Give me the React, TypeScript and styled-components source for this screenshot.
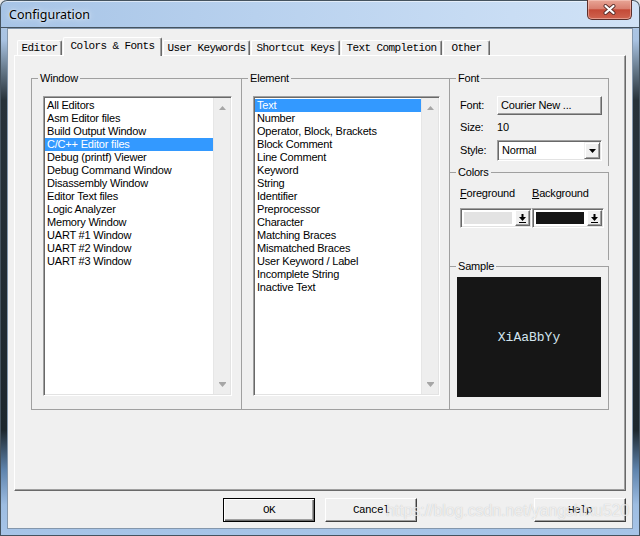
import { FC, ReactNode } from 'react'
import styled, { createGlobalStyle } from 'styled-components'

const windowItems = [
  'All Editors',
  'Asm Editor files',
  'Build Output Window',
  'C/C++ Editor files',
  'Debug (printf) Viewer',
  'Debug Command Window',
  'Disassembly Window',
  'Editor Text files',
  'Logic Analyzer',
  'Memory Window',
  'UART #1 Window',
  'UART #2 Window',
  'UART #3 Window'
]

const elementItems = [
  'Text',
  'Number',
  'Operator, Block, Brackets',
  'Block Comment',
  'Line Comment',
  'Keyword',
  'String',
  'Identifier',
  'Preprocessor',
  'Character',
  'Matching Braces',
  'Mismatched Braces',
  'User Keyword / Label',
  'Incomplete String',
  'Inactive Text'
]

const tabs = [
  { label: 'Editor', w: 45 },
  { label: 'Colors & Fonts', w: 99, active: true },
  { label: 'User Keywords', w: 87 },
  { label: 'Shortcut Keys', w: 89 },
  { label: 'Text Completion', w: 101 },
  { label: 'Other', w: 47 }
]

const UpArrow = () => (
  <svg width="7" height="4" viewBox="0 0 7 4">
    <path d="M0 4 L3.5 0 L7 4 Z" fill="#a6a6a6" />
  </svg>
)

const DownArrow = () => (
  <svg width="7" height="5" viewBox="0 0 7 5">
    <rect x="0" y="0" width="7" height="1" fill="#a6a6a6" />
    <path d="M0 1 L7 1 L3.5 5 Z" fill="#a6a6a6" />
  </svg>
)

const ComboTriangle = () => (
  <svg width="7" height="4" viewBox="0 0 7 4">
    <path d="M0 0 H7 L3.5 4 Z" fill="#000" />
  </svg>
)

const PickArrow = () => (
  <svg width="7" height="9" viewBox="0 0 7 9">
    <path d="M2.5 0 H4.5 V3 H7 L3.5 7 L0 3 H2.5 Z" fill="#000" />
    <rect x="0" y="8" width="7" height="1" fill="#000" />
  </svg>
)

const CloseGlyph = () => (
  <svg width="13" height="11" viewBox="0 0 13 11">
    <path d="M2.5 2 L10.5 9 M10.5 2 L2.5 9" stroke="#5a302c" strokeWidth="4" strokeLinecap="round" />
    <path d="M2.5 2 L10.5 9 M10.5 2 L2.5 9" stroke="#fff" strokeWidth="2.2" strokeLinecap="round" />
  </svg>
)

const ItemList: FC<{ items: string[]; selected: number; width: number }> = ({ items, selected, width }) => (
  <ListBox $w={width}>
    <Items>
      {items.map((item, i) => (
        <Item key={item} $selected={i === selected}>
          {item}
        </Item>
      ))}
    </Items>
    <ScrollBar>
      <UpArrow />
      <DownArrow />
    </ScrollBar>
  </ListBox>
)

const ColorPicker: FC<{ color: string }> = ({ color }) => (
  <ColorCombo>
    <Swatch style={{ background: color }} />
    <PickButton>
      <PickArrow />
    </PickButton>
  </ColorCombo>
)

const GroupBox: FC<{ title: string; w: number; h: number; open?: boolean; children: ReactNode }> = ({
  title,
  w,
  h,
  open,
  children
}) => (
  <Group $w={w} $h={h} $open={open}>
    <Legend>{title}</Legend>
    {children}
  </Group>
)

const App = () => {
  return (
    <>
      <GlobalStyle />
      <Window>
        <TitleBar>
          <Title>Configuration</Title>
          <CloseButton>
            <CloseGlyph />
          </CloseButton>
        </TitleBar>
        <Client>
          <TabStrip>
            {tabs.map((t) => (
              <Tab key={t.label} $w={t.w} $active={t.active}>
                {t.label}
              </Tab>
            ))}
          </TabStrip>
          <Panel>
            <GroupBox title="Window" w={211} h={338}>
              <ListBody>
                <ItemList items={windowItems} selected={3} width={189} />
              </ListBody>
            </GroupBox>
            <Overlap>
              <GroupBox title="Element" w={209} h={338}>
                <ListBody>
                  <ItemList items={elementItems} selected={0} width={187} />
                </ListBody>
              </GroupBox>
            </Overlap>
            <RightColumn>
              <GroupBox title="Font" w={160} h={94} open>
                <FontGrid>
                  <Label>Font:</Label>
                  <FontButton>Courier New ...</FontButton>
                  <Label>Size:</Label>
                  <Label>10</Label>
                  <Label>Style:</Label>
                  <ComboBox>
                    <ComboText>Normal</ComboText>
                    <ComboButton>
                      <ComboTriangle />
                    </ComboButton>
                  </ComboBox>
                </FontGrid>
              </GroupBox>
              <GroupBox title="Colors" w={160} h={94} open>
                <ColorGrid>
                  <Label>
                    <u>F</u>oreground
                  </Label>
                  <Label>
                    <u>B</u>ackground
                  </Label>
                  <ColorPicker color="#e3e3e3" />
                  <ColorPicker color="#151515" />
                </ColorGrid>
              </GroupBox>
              <GroupBox title="Sample" w={160} h={150}>
                <SampleBody>
                  <SampleBox>XiAaBbYy</SampleBox>
                </SampleBody>
              </GroupBox>
            </RightColumn>
          </Panel>
          <ButtonRow>
            <DialogButton $default>OK</DialogButton>
            <DialogButton>Cancel</DialogButton>
            <HelpButton>Help</HelpButton>
          </ButtonRow>
        </Client>
        <Watermark>https://blog.csdn.net/yangshixu520</Watermark>
      </Window>
    </>
  )
}

const GlobalStyle = createGlobalStyle`
  html, body {
    margin: 0;
    padding: 0;
    background: #e9e9e9;
  }

  body {
    font-family: 'Liberation Sans', Arial, sans-serif;
  }

  #root {
    width: 640px;
    height: 536px;
  }
`

const Window = styled.div`
  position: relative;
  width: 640px;
  height: 536px;
  display: flex;
  flex-direction: column;
  border-radius: 7px 7px 0 0;
  overflow: hidden;
  background: linear-gradient(
    180deg,
    #b2cbe8 0px,
    #a9c3e2 40px,
    #66798a 70px,
    #27323a 100px,
    #1d272d 430px,
    #5f84ad 470px,
    #9dbde2 505px,
    #a8c5e8 536px
  );
  box-shadow: inset 0 0 0 1px #45535f;
`

const TitleBar = styled.div`
  flex: none;
  height: 28px;
  display: flex;
  align-items: flex-start;
  padding: 0 8px 0 9px;
  border-radius: 7px 7px 0 0;
  background: linear-gradient(90deg, #a7c4e6 0%, #b8d1ee 40%, #c9ddf4 80%, #d0e2f6 100%);
  box-shadow: inset 0 0 0 1px #45535f, inset 0 2px 0 rgba(255, 255, 255, 0.55);
`

const Title = styled.div`
  padding-top: 6px;
  font-family: 'Noto Sans', 'Liberation Sans', sans-serif;
  font-size: 12.5px;
  line-height: 18px;
  color: #000;
  text-shadow: 0 0 6px rgba(255, 255, 255, 0.9), 0 0 2px rgba(255, 255, 255, 0.8);
`

const CloseButton = styled.div`
  margin-left: auto;
  width: 45px;
  height: 20px;
  box-sizing: border-box;
  border: 1px solid #5c2f2b;
  border-top: none;
  border-radius: 0 0 5px 5px;
  background: linear-gradient(180deg, #e8a596 0%, #d98070 45%, #c44a37 52%, #cf6450 100%);
  box-shadow: inset 0 0 0 1px rgba(255, 220, 210, 0.45);
  display: flex;
  align-items: center;
  justify-content: center;
`

const Client = styled.div`
  flex: 1;
  margin: 0 7px 7px 7px;
  border: 1px solid #8497ac;
  background: #f0f0f0;
  display: flex;
  flex-direction: column;
  padding: 8px 6px 6px 6px;
`

const TabStrip = styled.div`
  position: relative;
  z-index: 1;
  height: 18px;
  display: flex;
  align-items: flex-end;
  gap: 1px;
  padding-left: 3px;
`

const Tab = styled.div<{ $w: number; $active?: boolean }>`
  width: ${(p) => p.$w}px;
  height: ${(p) => (p.$active ? 19 : 15)}px;
  margin-bottom: ${(p) => (p.$active ? -1 : 0)}px;
  box-sizing: border-box;
  padding-top: ${(p) => (p.$active ? 2 : 1)}px;
  background: #f0f0f0;
  border: 1px solid;
  border-color: #fff #696969 transparent #fff;
  border-bottom: none;
  border-radius: 2px 2px 0 0;
  box-shadow: inset -1px 0 #a0a0a0;
  font-family: 'Liberation Mono', 'Courier New', monospace;
  font-size: 11px;
  line-height: 13px;
  letter-spacing: -0.6px;
  text-align: center;
  white-space: nowrap;
  color: #000;
`

const Panel = styled.div`
  height: 436px;
  box-sizing: border-box;
  border: 1px solid;
  border-color: #fff #696969 #696969 #fff;
  box-shadow: inset -1px -1px #a0a0a0;
  padding: 16px 16px 0 16px;
  display: flex;
  align-items: flex-start;
`

const Group = styled.fieldset<{ $w: number; $h: number; $open?: boolean }>`
  margin: 0;
  padding: 0;
  min-width: 0;
  box-sizing: border-box;
  width: ${(p) => p.$w}px;
  height: ${(p) => p.$h}px;
  border: 1px solid #a0a0a0;
  border-bottom: ${(p) => (p.$open ? 'none' : '1px solid #a0a0a0')};
`

const Legend = styled.legend`
  margin-left: 6px;
  padding: 0 2px;
  font-size: 11px;
  line-height: 13px;
  letter-spacing: -0.2px;
  color: #000;
`

const Overlap = styled.div`
  margin-left: -1px;
`

const RightColumn = styled.div`
  margin-left: -1px;
  display: flex;
  flex-direction: column;
`

const ListBody = styled.div`
  padding: 11px 9px 0 11px;
`

const ListBox = styled.div<{ $w: number }>`
  width: ${(p) => p.$w}px;
  height: 300px;
  box-sizing: border-box;
  border: 1px solid;
  border-color: #a0a0a0 #fff #fff #a0a0a0;
  box-shadow: inset 1px 1px #696969, inset -1px -1px #e3e3e3;
  padding: 1px;
  background: #fff;
  display: flex;
`

const Items = styled.div`
  flex: 1;
  min-width: 0;
  padding-top: 1px;
`

const Item = styled.div<{ $selected?: boolean }>`
  height: 13px;
  line-height: 13px;
  padding-left: 2px;
  font-size: 11px;
  letter-spacing: -0.2px;
  white-space: nowrap;
  color: ${(p) => (p.$selected ? '#fff' : '#000')};
  background: ${(p) => (p.$selected ? '#3399ff' : 'transparent')};
`

const ScrollBar = styled.div`
  width: 17px;
  box-sizing: border-box;
  background: #eeeeee;
  border-left: 1px solid #e6e6e6;
  display: flex;
  flex-direction: column;
  align-items: center;
  justify-content: space-between;
  padding: 8px 0 7px;
`

const FontGrid = styled.div`
  display: grid;
  grid-template-columns: 37px 105px;
  grid-template-rows: 19px 13px 21px;
  row-gap: 6px;
  align-items: center;
  padding: 11px 0 0 10px;
`

const Label = styled.div`
  font-size: 11px;
  line-height: 13px;
  letter-spacing: -0.2px;
  color: #000;
  white-space: nowrap;
`

const FontButton = styled.div`
  height: 19px;
  box-sizing: border-box;
  border: 1px solid;
  border-color: #fff #696969 #696969 #fff;
  box-shadow: inset -1px -1px #a0a0a0;
  background: #f0f0f0;
  padding-left: 3px;
  font-size: 11px;
  line-height: 17px;
  letter-spacing: -0.2px;
  color: #000;
`

const ComboBox = styled.div`
  height: 21px;
  box-sizing: border-box;
  border: 1px solid;
  border-color: #a0a0a0 #fff #fff #a0a0a0;
  box-shadow: inset 1px 1px #696969, inset -1px -1px #e3e3e3;
  padding: 1px;
  background: #fff;
  display: flex;
`

const ComboText = styled.div`
  flex: 1;
  padding-left: 3px;
  font-size: 11px;
  line-height: 17px;
  letter-spacing: -0.2px;
  color: #000;
`

const ComboButton = styled.div`
  width: 16px;
  box-sizing: border-box;
  border: 1px solid;
  border-color: #f0f0f0 #696969 #696969 #f0f0f0;
  box-shadow: inset 1px 1px #fff, inset -1px -1px #a0a0a0;
  background: #f0f0f0;
  display: flex;
  align-items: center;
  justify-content: center;
`

const ColorGrid = styled.div`
  display: grid;
  grid-template-columns: 72px 72px;
  grid-template-rows: 13px 20px;
  row-gap: 8px;
  padding: 8px 0 0 10px;
`

const ColorCombo = styled.div`
  height: 20px;
  box-sizing: border-box;
  border: 1px solid;
  border-color: #a0a0a0 #fff #fff #a0a0a0;
  box-shadow: inset 1px 1px #696969, inset -1px -1px #e3e3e3;
  padding: 1px;
  background: #fff;
  display: flex;
`

const Swatch = styled.div`
  flex: 1;
  margin: 2px 3px 2px 2px;
`

const PickButton = styled.div`
  width: 15px;
  box-sizing: border-box;
  border: 1px solid;
  border-color: #fff #696969 #696969 #fff;
  box-shadow: inset -1px -1px #a0a0a0;
  background: #f0f0f0;
  display: flex;
  align-items: center;
  justify-content: center;
`

const SampleBody = styled.div`
  padding: 4px 0 0 7px;
`

const SampleBox = styled.div`
  width: 144px;
  height: 120px;
  background: #161616;
  display: flex;
  align-items: center;
  justify-content: center;
  font-family: 'Liberation Mono', 'Courier New', monospace;
  font-size: 13px;
  color: #d2e4ee;
`

const ButtonRow = styled.div`
  display: flex;
  gap: 10px;
  margin-top: 7px;
  padding-left: 209px;
`

const DialogButton = styled.div<{ $default?: boolean }>`
  width: 92px;
  height: 24px;
  box-sizing: border-box;
  border: 1px solid;
  border-color: ${(p) => (p.$default ? '#000' : '#fff #404040 #404040 #fff')};
  box-shadow: ${(p) =>
    p.$default ? 'inset 1px 1px #fff, inset -1px -1px #696969, inset -2px -2px #a0a0a0' : 'inset -1px -1px #a0a0a0'};
  background: #f0f0f0;
  font-family: 'Liberation Mono', 'Courier New', monospace;
  font-size: 11px;
  line-height: 22px;
  letter-spacing: -0.6px;
  text-align: center;
  color: #000;
`

const HelpButton = styled(DialogButton)`
  margin-left: auto;
`

const Watermark = styled.div`
  position: absolute;
  left: 386px;
  top: 502px;
  font-family: 'Liberation Sans', Arial, sans-serif;
  font-size: 15.8px;
  line-height: 18px;
  color: rgba(255, 255, 255, 0.72);
  text-shadow: 0 0 1px rgba(90, 90, 90, 0.35);
  white-space: nowrap;
  pointer-events: none;
`

export default App
